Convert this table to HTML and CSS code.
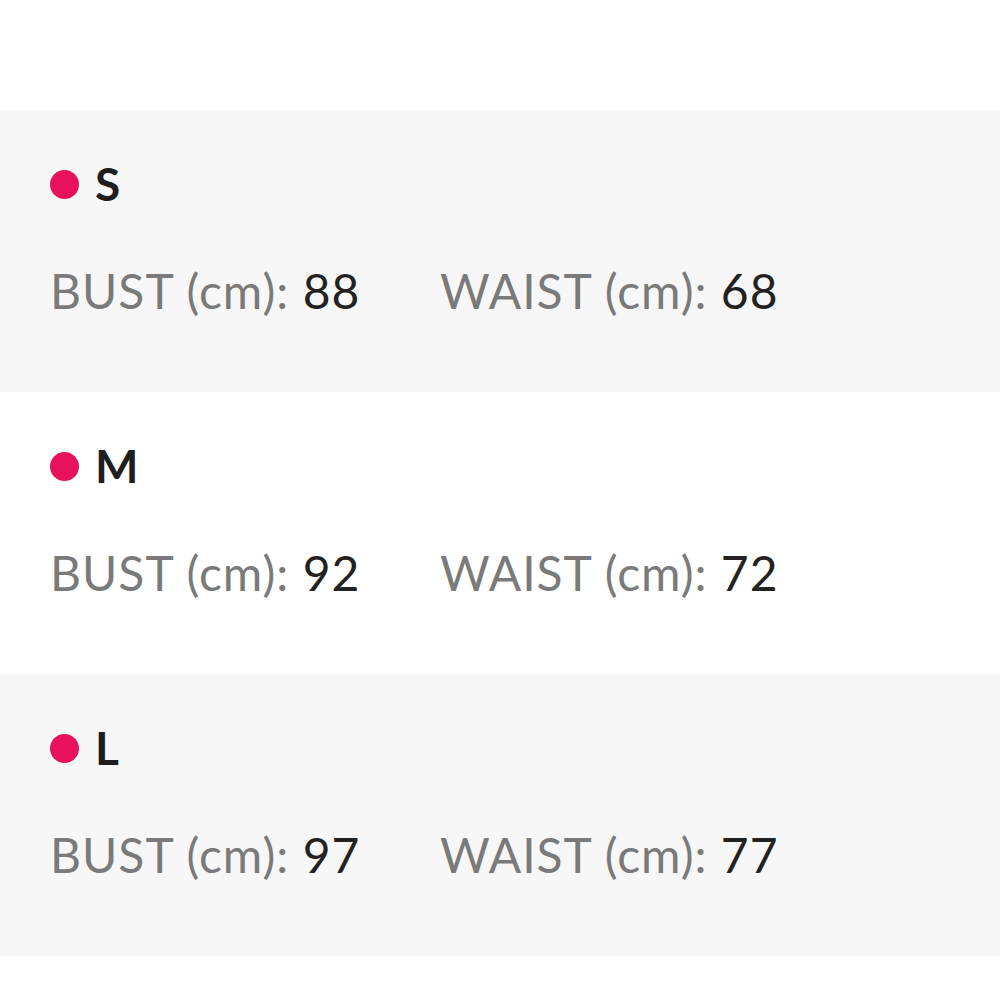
FILE: index.html
```html
<!DOCTYPE html>
<html>
<head>
<meta charset="utf-8">
<link rel="stylesheet" href="styles.css">
</head>
<body>
<div class="top"></div>
<div class="size gray">
  <div class="head"><span class="dot"></span><span class="label">S</span></div>
  <div class="row"><div class="m"><span class="k">BUST (cm):</span> <span class="v">88</span></div><div class="m"><span class="k">WAIST (cm):</span> <span class="v">68</span></div></div>
</div>
<div class="size">
  <div class="head"><span class="dot"></span><span class="label">M</span></div>
  <div class="row"><div class="m"><span class="k">BUST (cm):</span> <span class="v">92</span></div><div class="m"><span class="k">WAIST (cm):</span> <span class="v">72</span></div></div>
</div>
<div class="size gray">
  <div class="head"><span class="dot"></span><span class="label">L</span></div>
  <div class="row"><div class="m"><span class="k">BUST (cm):</span> <span class="v">97</span></div><div class="m"><span class="k">WAIST (cm):</span> <span class="v">77</span></div></div>
</div>
</body>
</html>
```
FILE: styles.css
```css
html, body { margin: 0; padding: 0; background: #fff; }
body { font-family: "Lato", "Noto Sans", sans-serif; }
.top { height: 110px; }
.size { height: 282px; box-sizing: border-box; padding: 50px 0 0 50px; display: flex; flex-direction: column; }
.gray { background: #f7f7f7; }
.head { display: flex; align-items: center; height: 48px; gap: 16px; }
.dot { width: 29px; height: 29px; border-radius: 50%; background: #e8125c; }
.label { font-size: 46px; font-weight: 700; color: #1e1e1e; line-height: 48px; }
.row { display: flex; margin-top: 55px; font-size: 48px; line-height: 56px; letter-spacing: 1px; }
.m { width: 390px; }
.k { color: #7a7a7a; }
.v { color: #222; }
```
